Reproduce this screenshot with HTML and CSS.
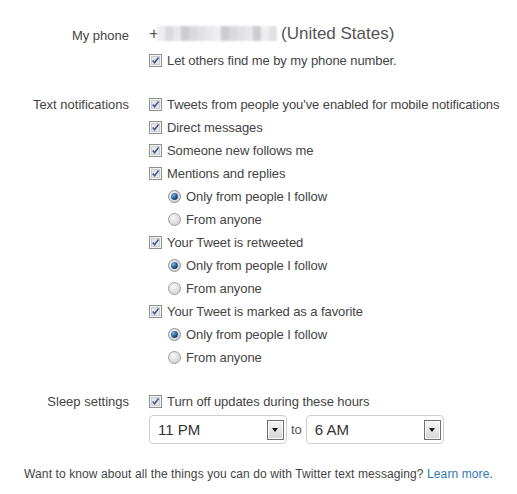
FILE: index.html
```html
<!DOCTYPE html>
<html>
<head>
<meta charset="utf-8">
<link rel="stylesheet" href="styles.css">
</head>
<body>
<div class="page">
  <div class="section">
    <div class="label phone-label">My phone</div>
    <div class="content">
      <div class="phone-row">
        <span class="plus">+</span>
        <span class="blur">
          <i class="c1"></i><i class="c2"></i><i class="c3"></i><i class="c4"></i><i class="c2"></i><i class="c5"></i><i class="c3"></i><i class="c1"></i><i class="c4"></i><i class="c2"></i><i class="c5"></i><i class="c3"></i><i class="c4"></i><i class="c1"></i><i class="c5"></i>
        </span>
        <span class="country">(United States)</span>
      </div>
      <div class="row tight"><span class="cb"></span>Let others find me by my phone number.</div>
    </div>
  </div>

  <div class="section">
    <div class="label">Text notifications</div>
    <div class="content">
      <div class="row"><span class="cb"></span>Tweets from people you've enabled for mobile notifications</div>
      <div class="row"><span class="cb"></span>Direct messages</div>
      <div class="row"><span class="cb"></span>Someone new follows me</div>
      <div class="row"><span class="cb"></span>Mentions and replies</div>
      <div class="row sub"><span class="rb on"></span>Only from people I follow</div>
      <div class="row sub"><span class="rb"></span>From anyone</div>
      <div class="row"><span class="cb"></span>Your Tweet is retweeted</div>
      <div class="row sub"><span class="rb on"></span>Only from people I follow</div>
      <div class="row sub"><span class="rb"></span>From anyone</div>
      <div class="row"><span class="cb"></span>Your Tweet is marked as a favorite</div>
      <div class="row sub"><span class="rb on"></span>Only from people I follow</div>
      <div class="row sub"><span class="rb"></span>From anyone</div>
    </div>
  </div>

  <div class="section">
    <div class="label">Sleep settings</div>
    <div class="content">
      <div class="row"><span class="cb"></span>Turn off updates during these hours</div>
      <div class="selects">
        <div class="select"><span class="val">11 PM</span><span class="arrow"></span></div>
        <span class="to">to</span>
        <div class="select"><span class="val">6 AM</span><span class="arrow"></span></div>
      </div>
    </div>
  </div>

  <p class="footer">Want to know about all the things you can do with Twitter text messaging? <a href="#">Learn more</a>.</p>
</div>
</body>
</html>
```
FILE: styles.css
```css
html, body {
  margin: 0;
  padding: 0;
  background: #fff;
}
body {
  font-family: "Liberation Sans", Arial, sans-serif;
  font-size: 13px;
  color: #444;
}
.page {
  width: 517px;
  height: 494px;
  padding-top: 19px;
  box-sizing: border-box;
}
.section {
  display: grid;
  grid-template-columns: 129px 1fr;
  column-gap: 20px;
  margin-bottom: 21px;
}
.label {
  text-align: right;
  line-height: 23px;
  color: #444;
}
.phone-label {
  line-height: 29px;
  padding-top: 2px;
}
.content {
  display: flex;
  flex-direction: column;
}
.phone-row {
  height: 29px;
  display: flex;
  align-items: center;
  font-size: 17px;
  color: #555;
}
.plus {
  width: 8px;
}
.blur {
  display: flex;
  width: 120px;
  height: 15px;
  margin-right: 4px;
  filter: blur(1.2px);
}
.blur i {
  flex: 1;
  height: 100%;
}
.c1 { background: #eeeef0; }
.c2 { background: #dadadd; }
.c3 { background: #e8e8ea; }
.c4 { background: #cdcdd0; }
.c5 { background: #e1e1e4; }
.row {
  height: 23px;
  display: flex;
  align-items: center;
  color: #444;
  white-space: nowrap;
  letter-spacing: -0.08px;
}
.row.tight {
  margin-top: 1px;
}
.row.sub {
  padding-left: 19px;
}
.cb {
  width: 11px;
  height: 11px;
  border: 1px solid #8e8f8f;
  margin-right: 5px;
  flex: none;
  background-color: #f4f4f4;
  background-image:
    url("data:image/svg+xml;utf8,<svg xmlns='http://www.w3.org/2000/svg' width='11' height='11' viewBox='0 0 11 11'><rect x='0.5' y='0.5' width='10' height='10' fill='none' stroke='%23f4f4f4'/><rect x='1.5' y='1.5' width='8' height='8' fill='%23e6e6e6' stroke='%23cccccc'/><path d='M2.7 5.4 L4.6 7.7 L8.5 2.5' fill='none' stroke='%233a5590' stroke-width='1.5'/></svg>");
  background-size: 11px 11px;
}
.rb {
  width: 13px;
  height: 13px;
  margin-right: 5px;
  flex: none;
  background-image: url("data:image/svg+xml;utf8,<svg xmlns='http://www.w3.org/2000/svg' width='13' height='13' viewBox='0 0 13 13'><defs><radialGradient id='g' cx='0.4' cy='0.35' r='0.7'><stop offset='0' stop-color='%23f8f8f8'/><stop offset='1' stop-color='%23cfcfcf'/></radialGradient></defs><circle cx='6.5' cy='6.5' r='6' fill='url(%23g)' stroke='%23a0a0a0'/></svg>");
}
.rb.on {
  background-image: url("data:image/svg+xml;utf8,<svg xmlns='http://www.w3.org/2000/svg' width='13' height='13' viewBox='0 0 13 13'><defs><radialGradient id='g' cx='0.4' cy='0.35' r='0.7'><stop offset='0' stop-color='%23f4f4f4'/><stop offset='1' stop-color='%23d0d0d0'/></radialGradient><radialGradient id='d' cx='0.35' cy='0.3' r='0.8'><stop offset='0' stop-color='%2380b6e0'/><stop offset='0.5' stop-color='%232a6aa0'/><stop offset='1' stop-color='%230c2f55'/></radialGradient></defs><circle cx='6.5' cy='6.5' r='6' fill='url(%23g)' stroke='%23909090'/><circle cx='6.5' cy='6.5' r='3.4' fill='url(%23d)'/></svg>");
}
.selects {
  display: flex;
  align-items: center;
  margin-top: 2px;
}
.select {
  width: 138px;
  height: 29px;
  box-sizing: border-box;
  border: 1px solid #cfcfcf;
  border-radius: 4px;
  display: flex;
  align-items: center;
  justify-content: space-between;
  padding: 0 2px 0 8px;
  font-size: 15px;
  color: #333;
  background: #fff;
}
.arrow {
  width: 17px;
  height: 20px;
  box-sizing: border-box;
  border: 1px solid #707070;
  background: linear-gradient(#f6f6f6, #d4d4d4);
  position: relative;
  box-shadow: inset 0 0 0 1px #fafafa;
}
.arrow::after {
  content: "";
  position: absolute;
  left: 4px;
  top: 7px;
  border-left: 3.5px solid transparent;
  border-right: 3.5px solid transparent;
  border-top: 4px solid #111;
}
.to {
  margin: 0 4px 0 4px;
  color: #555;
  font-size: 13px;
}
.footer {
  margin: 0;
  margin-top: -2px;
  text-align: center;
  line-height: 23px;
  color: #444;
  font-size: 12px;
  letter-spacing: 0.1px;
}
.footer a {
  color: #2f78b8;
  text-decoration: none;
}
```
